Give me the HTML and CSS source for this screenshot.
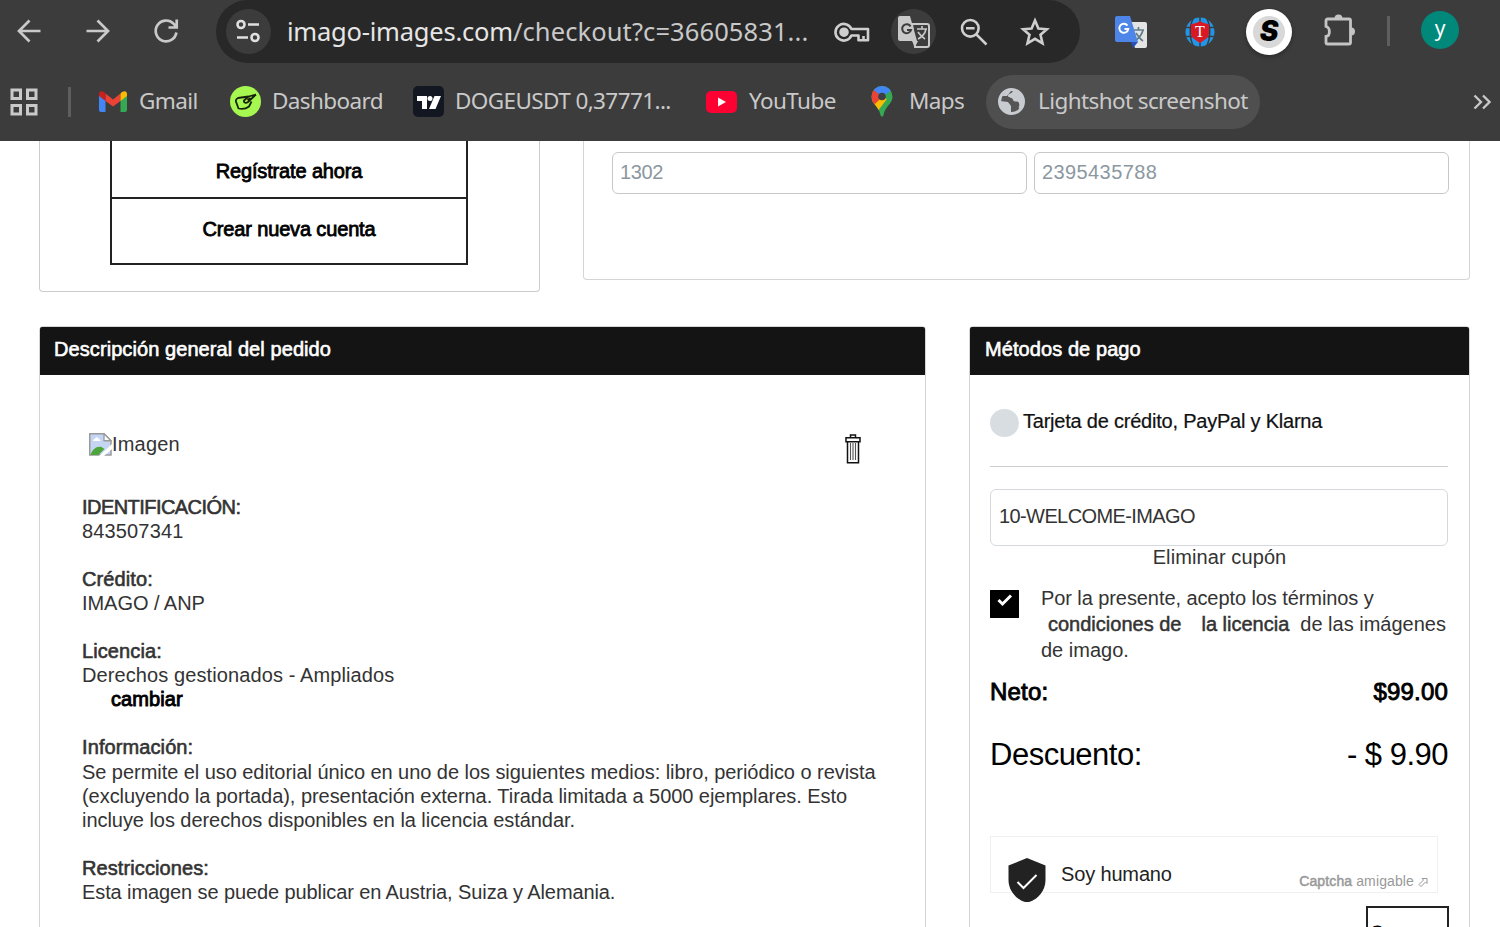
FILE: index.html
```html
<!DOCTYPE html>
<html lang="es">
<head>
  <meta charset="UTF-8">
  <title>Checkout - imago images</title>
  <link rel="stylesheet" href="styles.css">
</head>
<body>
  <div class="browser">
    <!-- Barra de direcciones -->
    <div class="toolbar">
      <svg class="nav-icon" width="26" height="26" viewBox="0 0 26 26"><path d="M24.500 13H3M13.500 2.500L3 13l10.500 10.500"/></svg>
      <svg class="nav-icon" width="26" height="26" viewBox="0 0 26 26"><path d="M1.500 13H23M12.500 2.500L23 13 12.500 23.500"/></svg>
      <svg class="nav-icon" width="26" height="26" viewBox="0 0 26 26"><path d="M23.400 14.500A10.400 10.400 0 1 1 20.500 5.600L23 8.300M23.700 1.500V9.500H15.500"/></svg>
      <div class="omnibox">
        <span class="round site-info">
          <svg width="26" height="24" viewBox="0 0 26 24" fill="none" stroke="#e0e0e0" stroke-width="2.600"><circle cx="6" cy="5.500" r="3.500"/><path d="M13 5.500h11M2 18.500h11"/><circle cx="20" cy="18.500" r="3.500"/></svg>
        </span>
        <span class="url"><span class="domain">imago-images.com</span>/checkout?c=36605831...</span>
        <svg class="key" width="36" height="22" viewBox="0 0 36 22" fill="none" stroke="#cfcfcf" stroke-width="2.600"><path d="M17.400 8A8.300 8.300 0 1 0 17.400 14.500H24.500V19.200H34V8Z" stroke-linejoin="round"/><circle cx="10" cy="11.200" r="3.500" fill="#cfcfcf"/><path d="M29.500 15v4"/></svg>
        <span class="round translate">
          <svg width="34" height="34" viewBox="0 0 34 34"><path d="M14 8h15a2 2 0 0 1 2 2v19a2 2 0 0 1-2 2H17z" fill="none" stroke="#c9c9c9" stroke-width="2"/><path d="M2 0h10l7 25H2a2 2 0 0 1-2-2V2a2 2 0 0 1 2-2z" fill="#c9c9c9"/><path d="M14 25h6l-3 6z" fill="#c9c9c9"/><path d="M19 13h10M24 10v3M28 13c-1 5-4 8-8 10M20 16c2 3 4 5 7 7" fill="none" stroke="#c9c9c9" stroke-width="1.600"/><path d="M12.600 10.500A4.500 4.500 0 1 0 13 14H9" fill="none" stroke="#3c3c3c" stroke-width="2"/></svg>
        </span>
        <svg class="lens" width="28" height="28" viewBox="0 0 28 28" fill="none" stroke="#cfcfcf" stroke-width="2.600"><circle cx="10.300" cy="10.300" r="8.300"/><path d="M16.300 16.300L26.500 26.500M6 10.300h8.600"/></svg>
        <svg class="star" width="30" height="30" viewBox="0 0 30 30" fill="none" stroke="#cfcfcf" stroke-width="2.600"><path d="M15 3.500l3.400 8 8.600.7-6.500 5.600 2 8.500-7.500-4.500-7.500 4.500 2-8.500L3 12.200l8.600-.7z"/></svg>
      </div>
      <svg class="ext-gt" width="32" height="32" viewBox="0 0 32 32"><path d="M12 6h18a2 2 0 0 1 2 2v22a2 2 0 0 1-2 2H20z" fill="#e4e4e4"/><path d="M18 14h11M23.500 11v3M28 14c-1 5-4 8-8 11M21 17c2 3 4 6 7 8" fill="none" stroke="#607d8b" stroke-width="1.700"/><path d="M16 26h7l-5 6z" fill="#2450b8"/><path d="M2 0h13l8 26H2a2 2 0 0 1-2-2V2a2 2 0 0 1 2-2z" fill="#4d86e8"/><path d="M12.500 9.600A4.500 4.500 0 1 0 13.300 13H9.500" fill="none" stroke="#fff" stroke-width="1.900"/></svg>
      <svg class="ext-t" width="30" height="30" viewBox="0 0 30 30"><circle cx="15" cy="15" r="14.500" fill="#2196e8"/><path d="M0 10.500h30M0 19.500h30M15 0v30M9 0C4 8 4 22 9 30M21 0c5 8 5 22 0 30" fill="none" stroke="#3c3c3c" stroke-width="1.500"/><path d="M15 4c3 2 6 3 9 3v9c0 4-4 7-9 10-5-3-9-6-9-10V7c3 0 6-1 9-3z" fill="#d71925"/><text x="15" y="20" class="t-letter">T</text></svg>
      <span class="ext-s"><span>S</span></span>
      <svg class="puzzle" width="32" height="32" viewBox="0 0 32 32"><path d="M4.500 5H26a1.500 1.500 0 0 1 1.500 1.500V28.500a1.500 1.500 0 0 1-1.500 1.500H4.500A1.500 1.500 0 0 1 3 28.500V22.500C7.500 22 7.500 13.500 3 12.500V6.500A1.500 1.500 0 0 1 4.500 5Z" fill="none" stroke="#c4c4c4" stroke-width="2.800"/><path d="M11.500 4.500a4 4 0 0 1 8 0zM28 13.500a4 4 0 0 1 0 8z" fill="#c4c4c4"/></svg>
      <span class="divider"></span>
      <span class="avatar">y</span>
    </div>
    <!-- Marcadores -->
    <div class="bookmarks">
      <svg class="apps" width="28" height="28" viewBox="0 0 28 28" fill="none" stroke="#c9c9c9" stroke-width="3"><path d="M2 2h8.500v8.500H2zM17.500 2H26v8.500h-8.500zM2 17.500h8.500V26H2zM17.500 17.500H26V26h-8.500z"/></svg>
      <span class="divider"></span>
      <svg class="bm-gmail" width="28" height="21" viewBox="0 0 28 21"><path d="M0 3v16a2 2 0 0 0 2 2h4.500V8z" fill="#4285f4"/><path d="M28 3v16a2 2 0 0 1-2 2h-4.500V8z" fill="#34a853"/><path d="M6.500 2.500L14 8.500l7.500-6v7.500L14 15.500 6.500 10z" fill="#ea4335"/><path d="M0 3C0 0 3.500-1 6.500 2.500V10L0 5z" fill="#c5221f"/><path d="M28 3c0-3-3.500-4-6.500-.5V10L28 5z" fill="#fbbc04"/></svg>
      <span class="bm gmail">Gmail</span>
      <svg class="bm-dash" width="31" height="31" viewBox="0 0 31 31"><circle cx="15.500" cy="15.500" r="15.500" fill="#a6f750"/><path d="M18.500 10.500L8 12c-2.500 1-2.500 3-1.500 5l2 5.500c4 1 8 0 10.500-2l2.500-5M26 8.500l-7.500 2-4.500 4c-.5 2.500 2 3 4 1.500L26 8.500M17.500 14l3-2" fill="none" stroke="#18220b" stroke-width="1.800" stroke-linejoin="round"/></svg>
      <span class="bm dash">Dashboard</span>
      <svg class="bm-tv" width="31" height="31" viewBox="0 0 31 31"><rect width="31" height="31" rx="5" fill="#131722"/><path d="M4 10h10v13H9v-8H4z" fill="#fff"/><circle cx="17" cy="12.500" r="2.500" fill="#fff"/><path d="M21.500 10H28l-5.500 13H16z" fill="#fff"/></svg>
      <span class="bm doge">DOGEUSDT 0,37771...</span>
      <svg class="bm-yt" width="31" height="22" viewBox="0 0 31 22"><rect width="31" height="22" rx="5" fill="#ff0033"/><path d="M12 6.500v9l8-4.500z" fill="#fff"/></svg>
      <span class="bm yt">YouTube</span>
      <svg class="bm-maps" width="22" height="31" viewBox="0 0 22 31"><clipPath id="pin"><path d="M11 0a10.500 10.500 0 0 1 10.500 10.500c0 7.500-7 9-9 18.500-.5 2-2.500 2-3 0C7.500 19.500.5 18 .5 10.500A10.500 10.500 0 0 1 11 0z"/></clipPath><g clip-path="url(#pin)"><path d="M0 0h22v31H0z" fill="#34a853"/><path d="M0 13l6 1 5-3 5 2L6 26 0 20z" fill="#fbbc04"/><path d="M0 0l11 11-7 7-4-2z" fill="#ea4335"/><path d="M3 4l8 7 10-7V0H3z" fill="#4285f4"/></g><circle cx="11" cy="10.500" r="3.800" fill="#3c4043"/></svg>
      <span class="bm maps">Maps</span>
      <span class="bm-pill">
        <svg width="27" height="27" viewBox="0 0 27 27"><circle cx="13.500" cy="13.500" r="12" fill="#555" stroke="#c8cbd0" stroke-width="3"/><path d="M2 13l8 1 3 4v7C6 24 2 20 2 13zM15 2c0 4-5 3-5 6 0 2 5 1 5 4 1 3 5 0 6 3s-1 4 0 6c4-3 5-8 3-12-2-4-5-6-9-7zM4 8l6-6 3 1-4 5z" fill="#c8cbd0"/></svg>
        <span class="bm light">Lightshot screenshot</span>
      </span>
      <svg class="more" width="18" height="16" viewBox="0 0 18 16" fill="none" stroke="#c9c9c9" stroke-width="2.300"><path d="M1.500 1.500L8 8l-6.500 6.500M10 1.500L16.500 8 10 14.500"/></svg>
    </div>
  </div>

  <main class="page">
    <div class="row row-top">
      <section class="card login">
        <div class="login-buttons">
          <button class="btn-register">Regístrate ahora</button>
          <button class="btn-create">Crear nueva cuenta</button>
        </div>
      </section>
      <section class="card address">
        <div class="field">1302</div>
        <div class="field phone">2395435788</div>
      </section>
    </div>

    <div class="row row-main">
      <!-- Pedido -->
      <section class="card order">
        <h2 class="h-order">Descripción general del pedido</h2>
        <div class="order-body">
          <div class="order-top">
            <svg width="23" height="23" viewBox="0 0 23 23"><path d="M.75.75H15l7 7V22H.75z" fill="#c5d6f5" stroke="#9a9a9a" stroke-width="1.500"/><path d="M1.500 22c2-6 6-9 11-8l3 2-6 6z" fill="#4da53c"/><path d="M4 8c0-2 2-2 2.500-3 1-1.500 3-1 3 1 2 0 2 2 2 2z" fill="#fff"/><path d="M15 .75v7h7z" fill="#fff" stroke="#9a9a9a" stroke-width="1.300"/><path d="M23 11L10 23h5l8-7z" fill="#fff"/></svg>
            <span class="alt">Imagen</span>
            <svg class="trash" width="16" height="30" viewBox="0 0 16 30" fill="none" stroke="#111" stroke-width="1.500"><path d="M5.500 3.500V1h5v2.500M1 3.700h14v4H1zM2.500 8v20.800h11V8"/><path d="M5.500 9v17M8 9v17M10.500 9v17" stroke="#555" stroke-width="1.100"/></svg>
          </div>
          <dl class="details">
            <dt class="t-id">IDENTIFICACIÓN:</dt>
            <dd class="t-num">843507341</dd>
            <dt>Crédito:</dt>
            <dd>IMAGO / ANP</dd>
            <dt>Licencia:</dt>
            <dd class="t-lic">Derechos gestionados - Ampliados<br><a class="change">cambiar</a></dd>
            <dt>Información:</dt>
            <dd>Se permite el uso editorial único en uno de los siguientes medios: libro, periódico o revista<br>(excluyendo la portada), presentación externa. Tirada limitada a 5000 ejemplares. Esto<br>incluye los derechos disponibles en la licencia estándar.</dd>
            <dt>Restricciones:</dt>
            <dd class="t-pub">Esta imagen se puede publicar en Austria, Suiza y Alemania.</dd>
          </dl>
        </div>
      </section>

      <!-- Pago -->
      <section class="card payment">
        <h2 class="h-pay">Métodos de pago</h2>
        <div class="payment-body">
          <div class="method"><span class="radio"></span><span class="method-name">Tarjeta de crédito, PayPal y Klarna</span></div>
          <div class="coupon">10-WELCOME-IMAGO</div>
          <div class="remove">Eliminar cupón</div>
          <div class="terms">
            <span class="checkbox"><svg width="16" height="13" viewBox="0 0 16 13" fill="none" stroke="#fff" stroke-width="3"><path d="M1.500 6l4 4L14 1.500"/></svg></span>
            <p><span class="line-one">Por la presente, acepto los términos y</span><br><b class="cond">condiciones de</b><b class="lic">la licencia</b>de las imágenes<br>de imago.</p>
          </div>
          <div class="total net"><span>Neto:</span><span>$99.00</span></div>
          <div class="total discount"><span>Descuento:</span><span>- $ 9.90</span></div>
          <div class="captcha">
            <svg width="38" height="44" viewBox="0 0 38 44"><path d="M19 0l18.500 7.500V22c0 11-8 19-15 21.500q-3.500 1-7 0C8.500 41 .5 33 .5 22V7.500z" fill="#222"/><path d="M9.500 24l6 6L28.500 17" fill="none" stroke="#fff" stroke-width="2"/></svg>
            <span class="human">Soy humano</span>
            <span class="brand"><span><b>Captcha</b> amigable</span><svg width="10" height="10" viewBox="0 0 10 10" fill="none" stroke="#999" stroke-width="1"><path d="M1 7.500L5.500 3 4 1.500h5v5L7.500 5 3 9.500z"/></svg></span>
          </div>
          <button class="btn-buy">Comprar</button>
        </div>
      </section>
    </div>
  </main>
</body>
</html>
```
FILE: styles.css
```css
* {
  box-sizing: border-box;
}

body {
  margin: 0;
  height: 927px;
  overflow: hidden;
  background-color: #fff;
  color: #333;
  font-family: "Liberation Sans", Arial, sans-serif;
  font-size: 20px;
}

svg {
  flex: none;
  display: block;
}

/* Navegador */
.browser {
  height: 141px;
  background-color: #3c3c3c;
  color: #c9c9c9;
  font-family: "Noto Sans", "Open Sans", sans-serif;
}

.toolbar {
  display: flex;
  align-items: center;
  height: 63px;
  padding-left: 16px;
}

.nav-icon {
  margin: -2px 42.5px 0 0;
  fill: none;
  stroke: #c9c9c9;
  stroke-width: 2.7;
}

.nav-icon:nth-child(3) {
  margin-right: 37px;
}

.omnibox {
  display: flex;
  align-items: center;
  flex: none;
  width: 864px;
  height: 63px;
  padding: 0 0 1px 10px;
  border-radius: 32px;
  background-color: #282828;
}

.round {
  display: flex;
  flex: none;
  align-items: center;
  justify-content: center;
  width: 45px;
  height: 45px;
  border-radius: 50%;
  background-color: #3c3c3c;
}

.site-info svg {
  margin-right: 2px;
}

.translate svg {
  margin: 3px 0 0 2px;
}

.url {
  width: 524px;
  margin: 0 23px 0 16px;
  font-size: 25.5px;
  letter-spacing: 0.1px;
  white-space: nowrap;
}

.domain {
  color: #e6e6e6;
  letter-spacing: -0.22px;
}

.key {
  margin: 1px 21px 0 0;
}

.lens {
  margin: 2px 32px 0 24px;
}

.star {
  margin-top: 1px;
}

.ext-gt {
  margin-left: 35px;
}

.ext-t {
  margin-left: 38px;
}

.t-letter {
  fill: #fff;
  font-family: "Liberation Serif", serif;
  font-size: 16px;
  text-anchor: middle;
}

.ext-s {
  display: flex;
  flex: none;
  align-items: center;
  justify-content: center;
  width: 46px;
  height: 46px;
  margin-left: 31px;
  border-radius: 50%;
  background-color: #fff;
  box-shadow: 0 2px 4px rgba(0, 0, 0, .3);
}

.ext-s span {
  width: 32px;
  height: 32px;
  border-radius: 50%;
  background-color: #d8d8d8;
  color: #000;
  font: italic 900 28px/31px Inter, sans-serif;
  text-align: center;
}

.puzzle {
  margin: -3px 0 0 31px;
}

.divider {
  flex: none;
  width: 3px;
  height: 30px;
  background-color: #5e5e5e;
}

.puzzle + .divider {
  margin: -2px 0 0 32px;
}

.avatar {
  flex: none;
  width: 38px;
  height: 38px;
  margin: -3px 0 0 31px;
  border-radius: 50%;
  background-color: #00897b;
  color: #fff;
  font-size: 21px;
  line-height: 35px;
  text-align: center;
}

/* Marcadores */
.bookmarks {
  display: flex;
  align-items: center;
  height: 78px;
  padding: 0 9px 1px 10px;
}

.bookmarks .divider {
  margin: 0 28px 0 30px;
}

.bm {
  flex: none;
  margin-top: -2px;
  font-size: 22.5px;
  letter-spacing: -0.6px;
  white-space: nowrap;
}

.gmail {
  width: 91px;
  margin-left: 12px;
}

.dash {
  width: 141px;
  margin-left: 11px;
}

.doge {
  width: 251px;
  margin-left: 11px;
}

.yt {
  width: 122px;
  margin-left: 12px;
}

.maps {
  width: 77px;
  margin-left: 16px;
}

.bm-pill {
  display: flex;
  flex: none;
  align-items: center;
  gap: 13px;
  width: 274px;
  height: 54px;
  padding-left: 12px;
  border-radius: 27px;
  background-color: #4f4f4f;
}

.more {
  margin-left: auto;
}

/* Página */
.row {
  display: flex;
  justify-content: space-between;
  align-items: flex-start;
  padding: 0 30px 0 39px;
}

.row-top {
  height: 185px;
}

.card {
  border: 1px solid #d5d5d5;
  border-radius: 4px;
}

.row-top .card {
  border-top: 0;
  border-radius: 0 0 4px 4px;
}

.login {
  width: 501px;
  height: 151px;
  padding-left: 70px;
  border-color: #ccc;
}

.login-buttons {
  display: flex;
  flex-direction: column;
  width: 358px;
  height: 124px;
  border: 2px solid #222;
  border-top: 0;
}

button {
  padding: 0;
  border: 0;
  background: none;
  color: #000;
  font: 20px "Liberation Sans", Arial, sans-serif;
  letter-spacing: -0.15px;
  -webkit-text-stroke: 0.8px;
}

.btn-register {
  height: 58px;
  padding-top: 4px;
  border-bottom: 2px solid #222;
}

.btn-create {
  height: 60px;
}

.address {
  display: flex;
  gap: 7px;
  width: 887px;
  height: 139px;
  padding: 11px 0 0 28px;
}

.field {
  width: 415px;
  height: 42px;
  padding-left: 7px;
  border: 1px solid #c8c8c8;
  border-radius: 6px;
  color: #8b989f;
  letter-spacing: -0.4px;
  line-height: 38px;
}

.phone {
  letter-spacing: 0.4px;
}

h2 {
  height: 48px;
  margin: 0;
  padding-left: 14px;
  border-radius: 2px 2px 0 0;
  background-color: #141414;
  color: #fff;
  font-size: 20px;
  font-weight: normal;
  letter-spacing: 0.08px;
  line-height: 45px;
  -webkit-text-stroke: 0.6px;
}

.h-pay {
  padding-left: 15px;
}

.order,
.payment {
  height: 640px;
}

.order {
  width: 887px;
}

.order-body {
  padding: 58px 0 0 42px;
}

.order-top {
  display: flex;
  height: 62px;
  padding-left: 7px;
}

.alt {
  letter-spacing: 0.2px;
  line-height: 23px;
}

.trash {
  margin: 1px 0 0 665px;
}

.details {
  margin: 0;
  letter-spacing: -0.05px;
  line-height: 24.05px;
  white-space: nowrap;
}

dt {
  letter-spacing: 0.1px;
  -webkit-text-stroke: 0.6px;
}

dd {
  margin: 0 0 24.05px;
}

.t-id {
  letter-spacing: -0.55px;
}

.t-num {
  letter-spacing: 0.15px;
}

.t-lic {
  letter-spacing: 0.1px;
}

.t-pub {
  letter-spacing: -0.1px;
}

.change {
  margin-left: 29px;
  color: #000;
  -webkit-text-stroke: 0.9px;
}

/* Pago */
.payment {
  width: 501px;
}

.payment-body {
  padding: 33px 21px 0 20px;
}

.method {
  display: flex;
  gap: 4px;
  height: 59px;
  border-bottom: 1px solid #ccc;
  color: #111;
}

.radio {
  width: 29px;
  height: 28px;
  margin-top: 1px;
  border-radius: 50%;
  background-color: #d8dde2;
}

.method-name {
  letter-spacing: -0.22px;
  line-height: 26px;
  -webkit-text-stroke: 0.2px;
}

.coupon {
  height: 57px;
  margin-top: 22px;
  padding-left: 8px;
  border: 1px solid #d5d9dd;
  border-radius: 6px;
  letter-spacing: -0.6px;
  line-height: 52px;
}

.remove {
  height: 40px;
  padding-left: 1px;
  letter-spacing: 0.1px;
  line-height: 22px;
  text-align: center;
}

.terms {
  display: flex;
  height: 82px;
}

.checkbox {
  display: flex;
  justify-content: center;
  width: 29px;
  height: 28px;
  margin: 4px 22px 0 0;
  padding-top: 4px;
  background-color: #000;
}

.terms p {
  margin: -1px 0 0;
  line-height: 26px;
  white-space: nowrap;
}

.terms b {
  font-weight: normal;
  -webkit-text-stroke: 0.5px;
}

.line-one {
  letter-spacing: -0.08px;
}

.cond {
  margin: 0 20px 0 7px;
}

.lic {
  margin-right: 11px;
}

.total {
  display: flex;
  justify-content: space-between;
  color: #000;
}

.net {
  height: 58px;
  padding-top: 2px;
  font-size: 24px;
  line-height: 44px;
  letter-spacing: 0.2px;
  -webkit-text-stroke: 0.9px;
}

.discount {
  height: 110px;
  font-size: 31px;
  letter-spacing: -0.5px;
  line-height: 58px;
}

.captcha {
  display: flex;
  width: 448px;
  height: 57px;
  padding: 21px 9px 0 17px;
  border: 1px solid #f0f0f0;
}

.human {
  margin-left: 15px;
  color: #222;
  letter-spacing: -0.15px;
  line-height: 33px;
}

.brand {
  display: flex;
  gap: 4px;
  margin-left: auto;
  color: #999;
  font-size: 14px;
  letter-spacing: 0.12px;
  line-height: 47px;
}

.brand svg {
  margin-top: 19px;
}

.brand b {
  font-weight: normal;
  -webkit-text-stroke: 0.5px;
}

.btn-buy {
  display: block;
  width: 83px;
  height: 54px;
  margin: 13px -1px 0 auto;
  padding: 0 2px;
  border: 2px solid #222;
  font-size: 19px;
  text-align: left;
}
```
